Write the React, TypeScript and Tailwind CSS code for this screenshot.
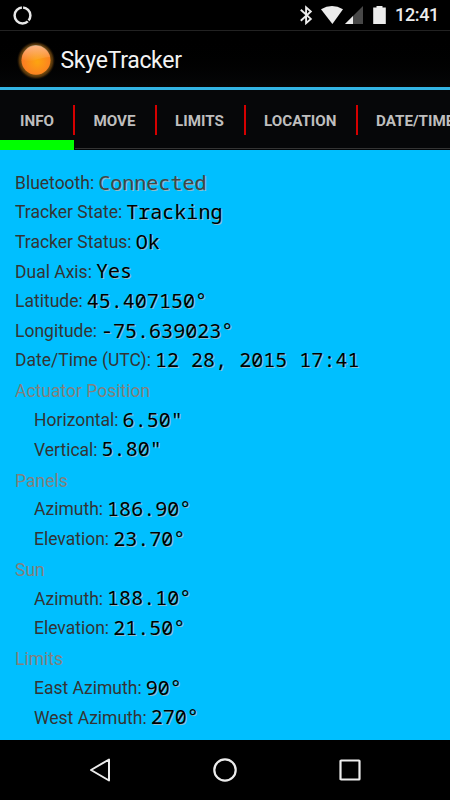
import React from 'react';

type Row = { label: string; value: string; indent?: boolean; muted?: boolean };

const status: Row[] = [
  { label: 'Bluetooth:', value: 'Connected', muted: true },
  { label: 'Tracker State:', value: 'Tracking' },
  { label: 'Tracker Status:', value: 'Ok' },
  { label: 'Dual Axis:', value: 'Yes' },
  { label: 'Latitude:', value: '45.407150°' },
  { label: 'Longitude:', value: '-75.639023°' },
  { label: 'Date/Time (UTC):', value: '12 28, 2015 17:41' },
];

const groups: { title: string; rows: Row[] }[] = [
  {
    title: 'Actuator Position',
    rows: [
      { label: 'Horizontal:', value: '6.50"' },
      { label: 'Vertical:', value: '5.80"' },
    ],
  },
  {
    title: 'Panels',
    rows: [
      { label: 'Azimuth:', value: '186.90°' },
      { label: 'Elevation:', value: '23.70°' },
    ],
  },
  {
    title: 'Sun',
    rows: [
      { label: 'Azimuth:', value: '188.10°' },
      { label: 'Elevation:', value: '21.50°' },
    ],
  },
  {
    title: 'Limits',
    rows: [
      { label: 'East Azimuth:', value: '90°' },
      { label: 'West Azimuth:', value: '270°' },
    ],
  },
];

// Each character sits in a cell of the same width, as on a fixed-pitch readout.
function Readout({ text, muted }: { text: string; muted?: boolean }) {
  return (
    <span
      className={
        "whitespace-pre pt-[0.5px] font-['Noto_Sans_Mono','Noto_Sans',sans-serif] text-[20px] [text-shadow:1px_1px_0_#8cbccb] " +
        (muted ? 'text-[#454545]' : 'text-black')
      }
    >
      {text.split('').map((c, i) => (
        <span
          key={i}
          className={
            'inline-block w-[12.04px] text-center' +
            (c === 'i' ? " font-['DejaVu_Sans_Mono',monospace]" : '')
          }
        >
          {c}
        </span>
      ))}
    </span>
  );
}

function InfoRow({ label, value, indent, muted }: Row) {
  return (
    <div
      className={
        'flex h-[29.62px] whitespace-nowrap leading-[29px] ' +
        (indent ? 'pl-[34px]' : 'pl-[15px]')
      }
    >
      <span className="mr-[4px] pt-[1.7px] text-[17.5px] text-[#343434]">{label}</span>
      <Readout text={value} muted={muted} />
    </div>
  );
}

const tabs = [
  { name: 'INFO', cls: 'w-[73px] pl-[20px]' },
  { name: 'MOVE', cls: 'w-[80px] pl-[18.5px]' },
  { name: 'LIMITS', cls: 'w-[87px] pl-[18px]' },
  { name: 'LOCATION', cls: 'w-[110px] pl-[18px]' },
  { name: 'DATE/TIME', cls: 'w-[100px] pl-[18px]' },
];

export default function App() {
  return (
    <div className="flex h-[800px] w-[450px] flex-col overflow-hidden bg-black font-['Roboto',sans-serif]">
      <div className="flex h-[30px] shrink-0 items-center justify-between pl-[13px] pr-[11px]">
        <svg width="19" height="19" viewBox="0 0 19 19" fill="none">
          <circle cx="9.5" cy="9.5" r="7.9" stroke="#e8e8e8" strokeWidth="2.5" />
          <path d="M9.5 0v4M13.8 13.8l3.7 3.1" stroke="#000" strokeWidth="1.2" />
        </svg>
        <div className="flex items-center">
          <svg width="87" height="20" viewBox="300 5 87 20" fill="#ececec">
            <path d="M301.8 9.7l10 9.2-4.7 4.2V7.3l4.7 4.2-10 9.2" fill="none" stroke="#ececec" strokeWidth="1.9" />
            <path d="M322 9.2Q333 2.8 344 9.2L333.4 24Z" />
            <path d="M364 6V24H346Z" fill="#484848" />
            <path d="M354 16V24H346Z" />
            <path d="M377.5 6h6v1.5h3.3V24h-12.6V7.5h3.3Z" />
          </svg>
          <span className="ml-[9px] text-[18px] font-medium leading-[30px] tracking-[-0.35px] text-[#ececec]">12:41</span>
        </div>
      </div>

      <div className="flex h-[57px] shrink-0 items-center border-t border-[#222] bg-gradient-to-b from-black to-[#060708] pl-[16px]">
        <svg width="40" height="40" viewBox="0 0 40 40">
          <defs>
            <radialGradient id="halo">
              <stop offset="0.7" stopColor="#8a5a12" />
              <stop offset="0.88" stopColor="#4d300a" />
              <stop offset="1" stopColor="#1a1004" stopOpacity="0.2" />
            </radialGradient>
            <radialGradient id="sun" cx="0.55" cy="0.55" r="0.55">
              <stop offset="0" stopColor="#fca510" />
              <stop offset="1" stopColor="#fb7a24" />
            </radialGradient>
            <linearGradient id="gloss" x1="0" y1="0" x2="0" y2="1">
              <stop offset="0" stopColor="#fff" stopOpacity="0.45" />
              <stop offset="1" stopColor="#fff" stopOpacity="0" />
            </linearGradient>
          </defs>
          <circle cx="20" cy="21.5" r="19" fill="url(#halo)" />
          <circle cx="20" cy="21.3" r="14.5" fill="url(#sun)" />
          <path d="M5.8 20a14.3 14.3 0 0 1 28.4-2Q24 19 18 21.5T5.8 20Z" fill="url(#gloss)" />
        </svg>
        <span className="ml-[4.5px] mt-[3px] text-[23px] leading-[30px] tracking-[-0.3px] text-[#f3f3f3]">SkyeTracker</span>
      </div>
      <div className="h-[3px] shrink-0 bg-[#33b5e5]" />

      <div className="flex h-[60px] w-[450px] shrink-0 overflow-hidden bg-[#060709]">
        {tabs.map((t, i) => (
          <div key={t.name} className="flex shrink-0 flex-col">
            <div className="flex h-[50px] pt-[15px]">
              <span
                className={
                  'h-[30px] text-[15.2px] font-bold leading-[32px] text-[#bebebe] ' + t.cls
                }
              >
                {t.name}
              </span>
              {i < tabs.length - 1 && <span className="h-[30px] w-[2px] bg-[#d40000]" />}
            </div>
            {i === 0 ? (
              <div className="h-[10px] w-[74px] bg-[#00ff00]" />
            ) : (
              <div className="mt-[8px] h-[1px] bg-[#333]" />
            )}
          </div>
        ))}
      </div>

      <div className="h-[590px] shrink-0 overflow-hidden bg-[#00bfff] pt-[17px]">
        {status.map((r) => (
          <InfoRow key={r.label} {...r} />
        ))}
        {groups.map((g) => (
          <section key={g.title}>
            <h2 className="h-[30.1px] pl-[15px] pt-[2px] text-[17.5px] leading-[30px] text-[#83807c]">{g.title}</h2>
            {g.rows.map((r) => (
              <InfoRow key={r.label} {...r} indent />
            ))}
          </section>
        ))}
      </div>

      <div className="flex h-[60px] shrink-0 items-center justify-between pl-[88px] pr-[88px]">
        <svg width="24" height="26" viewBox="0 0 24 26" fill="none" stroke="#ececec" strokeWidth="2" strokeLinejoin="round">
          <path d="M3 13L21 2.5V23.5Z" />
        </svg>
        <svg width="26" height="26" viewBox="0 0 26 26" fill="none" stroke="#ececec" strokeWidth="2.2">
          <circle cx="13" cy="13" r="10.7" />
        </svg>
        <svg width="24" height="24" viewBox="0 0 24 24" fill="none" stroke="#ececec" strokeWidth="2.2">
          <rect x="2.5" y="2.5" width="19" height="19" rx="0.6" />
        </svg>
      </div>
    </div>
  );
}
